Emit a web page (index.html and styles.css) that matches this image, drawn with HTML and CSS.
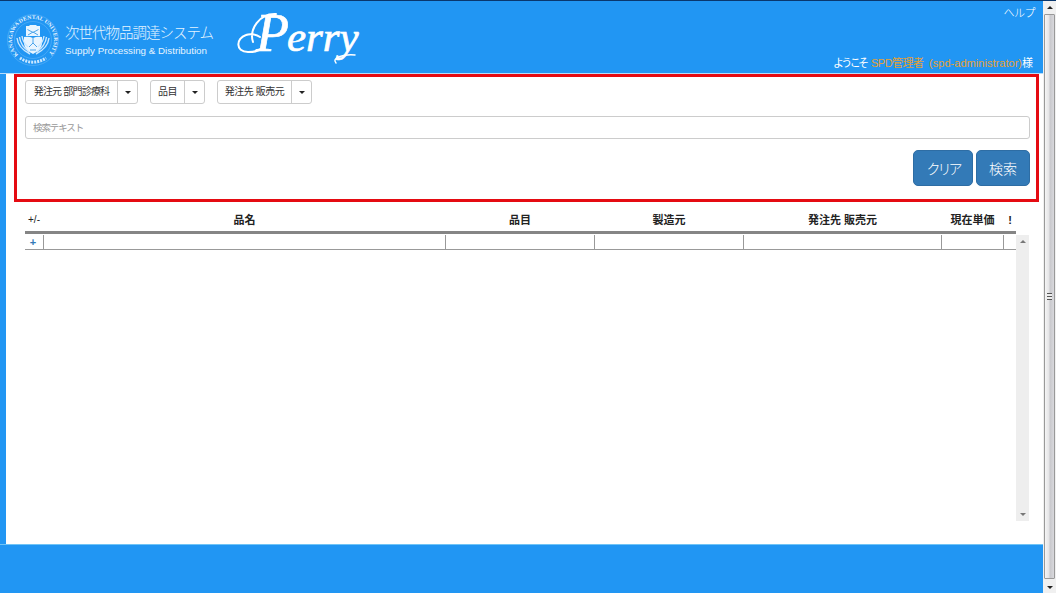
FILE: index.html
```html
<!DOCTYPE html>
<html lang="ja">
<head>
<meta charset="utf-8">
<title>次世代物品調達システム</title>
<link rel="stylesheet" href="styles.css">
</head>
<body>
<div class="window">
  <div class="page">
    <header class="header">
      <svg class="seal" viewBox="0 0 54 54">
        <defs><path id="ring" d="M12.200 41.800A21 21 0 1 1 41.800 41.800"/></defs>
        <circle class="seal-ring" cx="27" cy="27" r="18.500"/>
        <circle class="seal-ring" cx="27" cy="27" r="25.500"/>
        <text class="seal-text"><textPath href="#ring" textLength="97" lengthAdjust="spacingAndGlyphs">KANAGAWA DENTAL UNIVERSITY</textPath></text>
        <path class="seal-dots" d="M14 45A22.500 22.500 0 0 0 40 45"/>
        <path class="seal-fill" d="M20 13h3l1-1h6l1 1h3v10H20z"/>
        <path class="seal-line" d="M21.500 16.500l5.500 3 5.500-3M22 22l5-3 5 3"/>
        <path class="seal-fill" d="M18 24q5-1 9 1q4-2 9-1v7q-1 6-9 10q-8-4-9-10z"/>
        <path class="seal-line" d="M27 25v5l-4 4M27 30l4 4M24 37h6"/>
        <path class="seal-wing" d="M11 25q1 10 13 16M13.500 24q1 9 10 15M16 23q1 7 6 11M43 25q-1 10-13 16M40.500 24q-1 9-10 15M38 23q-1 7-6 11"/>
      </svg>
      <div class="brand">
        <svg class="brand-text" viewBox="0 0 150 40">
          <text class="brand-ja" x="0" y="18" textLength="149">次世代物品調達システム</text>
          <text class="brand-en" x="0" y="34" textLength="142" lengthAdjust="spacingAndGlyphs">Supply Processing &amp; Distribution</text>
        </svg>
      </div>
      <svg class="perry" viewBox="0 0 126 60">
        <path class="swash" d="M16 32C12 20 22 3 39 4M25 38C21 42 16 42 11 42C-2 42-1 28 9 25C14 23 20 25 23 27"/>
        <text class="perry-text" x="19" y="41"><tspan class="cap">P</tspan><tspan dx="-2">erry</tspan></text>
        <path class="swash thin" d="M99 53C94 48 106 44 118 45"/>
      </svg>
      <div class="user">
        <a class="help">ヘルプ</a>
        <svg class="welcome" viewBox="0 0 202 18">
          <text x="0" y="13" textLength="36">ようこそ</text>
          <text class="name" x="38" y="13" textLength="53">SPD管理者</text>
          <text class="name" x="96" y="13" textLength="93">(spd-administrator)</text>
          <text x="189" y="13" textLength="11">様</text>
        </svg>
      </div>
    </header>
    <main class="main">
      <section class="search">
        <div class="filters">
          <div class="drop wide"><span>発注元 部門診療科</span><i></i></div>
          <div class="drop short"><span>品目</span><i></i></div>
          <div class="drop medium"><span>発注先 販売元</span><i></i></div>
        </div>
        <div class="field">検索テキスト</div>
        <div class="actions"><button class="clear">クリア</button><button>検索</button></div>
      </section>
      <section class="results">
        <div class="row head"><b class="sign">+/-</b><b>品名</b><b>品目</b><b>製造元</b><b>発注先 販売元</b><b>現在単価</b><b>!</b></div>
        <div class="list">
          <div class="row item"><a>+</a><span></span><span></span><span></span><span></span><span></span><span></span></div>
          <div class="inner-scroll"><i class="up"></i><i class="down"></i></div>
        </div>
      </section>
    </main>
    <footer class="footer"></footer>
  </div>
  <div class="scrollbar"><i class="up"></i><div class="thumb"><span class="grip"></span></div><i class="down"></i></div>
</div>
</body>
</html>
```
FILE: styles.css
```css
* { box-sizing: border-box; }
body {
  margin: 0;
  overflow: hidden;
  font-family: "Liberation Sans", "Noto Sans CJK JP", sans-serif;
  font-size: 11px;
  color: #333;
}
.window { display: flex; width: 1056px; height: 593px; border-top: 1px solid #09376e; }
.page { width: 1043px; display: flex; flex-direction: column; }
.header {
  height: 73px;
  display: flex;
  padding-left: 6px;
  background: #2196f3;
  border-bottom: 1px solid #b5dcfb;
  color: #fff;
}
.seal { width: 54px; height: 54px; margin-top: 12px; flex: none; overflow: visible; }
.seal-ring { fill: none; stroke: #5eb3f6; stroke-width: .6; }
.seal-text { font: bold 5.5px "Liberation Serif", serif; fill: #e8f5ff; }
.seal-dots { fill: none; stroke: #c9e7ff; stroke-width: 3; stroke-dasharray: 2 1; }
.seal-fill { fill: #e8f5ff; }
.seal-line { fill: none; stroke: #4ba5eb; stroke-width: 1; }
.seal-wing { fill: none; stroke: #c9e7ff; stroke-width: 1.4; }
.brand { margin: 19px 0 0 5px; width: 150px; }
.brand-text { display: block; width: 150px; height: 40px; overflow: visible; }
.brand-ja { font-size: 14.5px; font-weight: 300; fill: #e4f4ff; font-family: "Noto Sans CJK JP", sans-serif; }
.brand-en { font-size: 9.5px; fill: #e4f4ff; }
.perry { width: 126px; height: 60px; margin: 9px 0 0 22px; overflow: visible; }
.perry-text { font: italic 43px "Liberation Serif", serif; fill: #fff; stroke: #fff; stroke-width: .7; }
.cap { font-size: 54px; }
.swash { fill: none; stroke: #fff; stroke-width: 2; stroke-linecap: round; }
.swash.thin { stroke-width: 1.5; }
.user { margin-left: auto; padding: 3px 8px 0 0; display: flex; flex-direction: column; align-items: flex-end; justify-content: space-between; }
.help { font-size: 11px; line-height: 18px; font-weight: 300; letter-spacing: -.5px; }
.welcome { display: block; width: 202px; height: 18px; font-size: 11px; fill: #fff; margin-bottom: 1px; }
.welcome .name { fill: #e5a035; }
.main { height: 470px; border-left: 6px solid #2196f3; padding-left: 8px; }
.search { width: 1025px; height: 128px; border: 3px solid #e50b12; padding: 3px 6px 0 8px; }
.filters { display: flex; }
.drop { display: flex; height: 24px; border: 1px solid #ccc; border-radius: 3px; font-size: 10px; line-height: 22px; white-space: nowrap; letter-spacing: -.5px; }
.drop span { flex: 1; text-align: center; }
.drop i { width: 20px; border-left: 1px solid #ccc; display: flex; align-items: center; justify-content: center; }
.drop i::after { content: ""; border: 3.5px solid transparent; border-top-color: #222; border-bottom: 0; }
.wide { width: 113px; margin-right: 12px; }
.wide span { letter-spacing: -.8px; }
.short { width: 55px; margin-right: 12px; }
.medium { width: 95px; }
.field { height: 23px; margin-top: 12px; border: 1px solid #ccc; border-radius: 3px; padding-left: 7px; font-size: 9.5px; line-height: 21px; color: #999; letter-spacing: -1.1px; }
.actions { display: flex; justify-content: flex-end; gap: 3px; margin-top: 11px; }
.actions button { width: 54px; height: 36px; padding: 0 0 1px; border: 1px solid #2e6da4; border-radius: 5px; background: #337ab7; color: #fff; font: 300 14px "Noto Sans CJK JP", sans-serif; }
.actions .clear { width: 60px; letter-spacing: -3px; }
.results { width: 1005px; margin-left: 11px; padding-top: 7px; }
.row { display: grid; width: 991px; grid-template-columns: 18px 402px 149px 149px 198px 62px 13px; }
.head { height: 25px; border-bottom: 3px solid #858585; line-height: 22px; text-align: center; font-size: 11px; color: #222; white-space: nowrap; }
.head > b + b { padding-left: 1px; }
.sign { font-size: 10px; font-weight: normal; }
.list { display: flex; height: 287px; padding-top: 1px; }
.item { height: 15px; border-bottom: 1px solid #999; }
.item > * { border-left: 1px solid #999; }
.item a { border: 0; padding-right: 2px; color: #337ab7; font-weight: bold; text-align: center; line-height: 14px; }
.inner-scroll { width: 13px; background: #eee; display: flex; flex-direction: column; justify-content: space-between; align-items: center; padding: 5px 0; }
.up { border: 3px solid transparent; border-bottom-color: #777; border-top: 0; }
.down { border: 3px solid transparent; border-top-color: #777; border-bottom: 0; }
.footer { height: 49px; background: #2196f3; border-top: 1px solid #70c4f6; }
.scrollbar { width: 13px; background: #f0f0f0; display: flex; flex-direction: column; align-items: center; padding: 5px 0 4px; }
.scrollbar .up { border-bottom-color: #222; }
.scrollbar .down { border-top-color: #222; }
.thumb { width: 11px; flex: 1; margin: 5px 0 7px; border: 1px solid #999; border-radius: 1px; background: linear-gradient(90deg, #f5f5f5, #e4e4e6 45%, #c8c8cc 55%, #d9d9dd); display: flex; align-items: center; justify-content: center; }
.grip { width: 5px; height: 7px; background: repeating-linear-gradient(#555 0 1px, #eee 1px 3px); }
```
